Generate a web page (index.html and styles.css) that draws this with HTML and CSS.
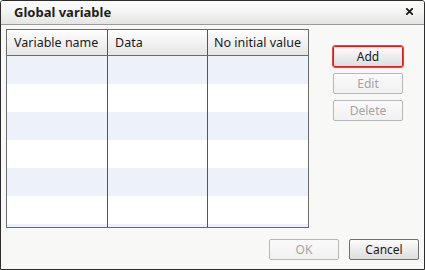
FILE: index.html
```html
<!DOCTYPE html>
<html>
<head>
<meta charset="utf-8">
<link rel="stylesheet" href="styles.css">
</head>
<body>
<div class="window">
  <div class="titlebar">
    <span class="title">Global variable</span>
    <svg class="close" width="7" height="7" viewBox="0 0 7 7"><path d="M0.8 0.8 L6.2 6.2 M6.2 0.8 L0.8 6.2" stroke="#1a1a1a" stroke-width="1.8" stroke-linecap="square"/></svg>
  </div>
  <div class="content">
    <div class="main">
      <div class="grid">
        <div class="row head">
          <div class="cell c1">Variable name</div>
          <div class="cell c2">Data</div>
          <div class="cell c3">No initial value</div>
        </div>
        <div class="row alt"><div class="cell c1"></div><div class="cell c2"></div><div class="cell c3"></div></div>
        <div class="row"><div class="cell c1"></div><div class="cell c2"></div><div class="cell c3"></div></div>
        <div class="row alt"><div class="cell c1"></div><div class="cell c2"></div><div class="cell c3"></div></div>
        <div class="row"><div class="cell c1"></div><div class="cell c2"></div><div class="cell c3"></div></div>
        <div class="row alt"><div class="cell c1"></div><div class="cell c2"></div><div class="cell c3"></div></div>
        <div class="row"><div class="cell c1"></div><div class="cell c2"></div><div class="cell c3"></div></div>
        <div class="row alt last"><div class="cell c1"></div><div class="cell c2"></div><div class="cell c3"></div></div>
      </div>
      <div class="side">
        <button class="btn focus">Add</button>
        <button class="btn" disabled>Edit</button>
        <button class="btn" disabled>Delete</button>
      </div>
    </div>
    <div class="footer">
      <button class="btn" disabled>OK</button>
      <button class="btn">Cancel</button>
    </div>
  </div>
</div>
</body>
</html>
```

FILE: styles.css
```css
html, body {
  margin: 0;
  padding: 0;
  background: #ffffff;
}
body {
  font-family: "Noto Sans", "DejaVu Sans", sans-serif;
  font-size: 12px;
  color: #1a1a1a;
}
.window {
  width: 425px;
  height: 270px;
  box-sizing: border-box;
  border: 1px solid #2c2c2c;
  border-radius: 3px 3px 0 0;
  background: #f8f8f6;
  display: flex;
  flex-direction: column;
  overflow: hidden;
}
.titlebar {
  height: 23px;
  flex: none;
  border-bottom: 1px solid #9a9a98;
  background: linear-gradient(#fdfdfd, #f3f3f1 50%, #e4e4e2);
  display: flex;
  align-items: center;
  justify-content: space-between;
  padding: 0 11px 0 13px;
}
.title {
  font-weight: bold;
  font-size: 13px;
  color: #1e1e1e;
  line-height: 23px;
}
.close {
  display: block;
  margin-top: -3px;
}
.content {
  flex: 1;
  display: flex;
  flex-direction: column;
  padding: 4px 5px 9px 5px;
}
.main {
  display: flex;
  align-items: flex-start;
}
.grid {
  width: 303px;
  height: 199px;
  box-sizing: border-box;
  border: 1px solid #6a6a6a;
  background: #ffffff;
  display: flex;
  flex-direction: column;
  overflow: hidden;
}
.row {
  display: flex;
  height: 28px;
  flex: none;
}
.row.alt {
  background: #edf1f9;
}
.row.head {
  height: 25px;
  border-bottom: 1px solid #6a6a6a;
  background: linear-gradient(#fefefe, #f2f2f2 50%, #e6e6e6);
}
.cell {
  box-sizing: border-box;
  height: 100%;
}
.c1 { width: 101px; border-right: 1px solid #555; padding-left: 7px; }
.c2 { width: 100px; border-right: 1px solid #555; padding-left: 7px; }
.c3 { width: 100px; padding-left: 6px; }
.head .cell {
  line-height: 25px;
  font-size: 12.5px;
  color: #1a1a1a;
}
.side {
  margin-left: 24px;
  margin-top: 17px;
  display: flex;
  flex-direction: column;
  gap: 6px;
}
.btn {
  width: 70px;
  height: 21px;
  box-sizing: border-box;
  border: 1px solid #707070;
  border-radius: 2px;
  background: linear-gradient(#fdfdfd, #ececec 50%, #dedede);
  font-family: "Noto Sans", "DejaVu Sans", sans-serif;
  font-size: 12px;
  color: #1a1a1a;
  padding: 0;
  line-height: 19px;
  margin: 0;
}
.btn:disabled {
  border-color: #b8b8b8;
  background: linear-gradient(#fafafa, #f1f1f1);
  color: #a3a3a3;
}
.btn.focus {
  border-color: #e01818;
  outline: 1px solid #f04040;
}
.footer {
  margin-top: auto;
  display: flex;
  justify-content: flex-end;
  gap: 10px;
}
```
